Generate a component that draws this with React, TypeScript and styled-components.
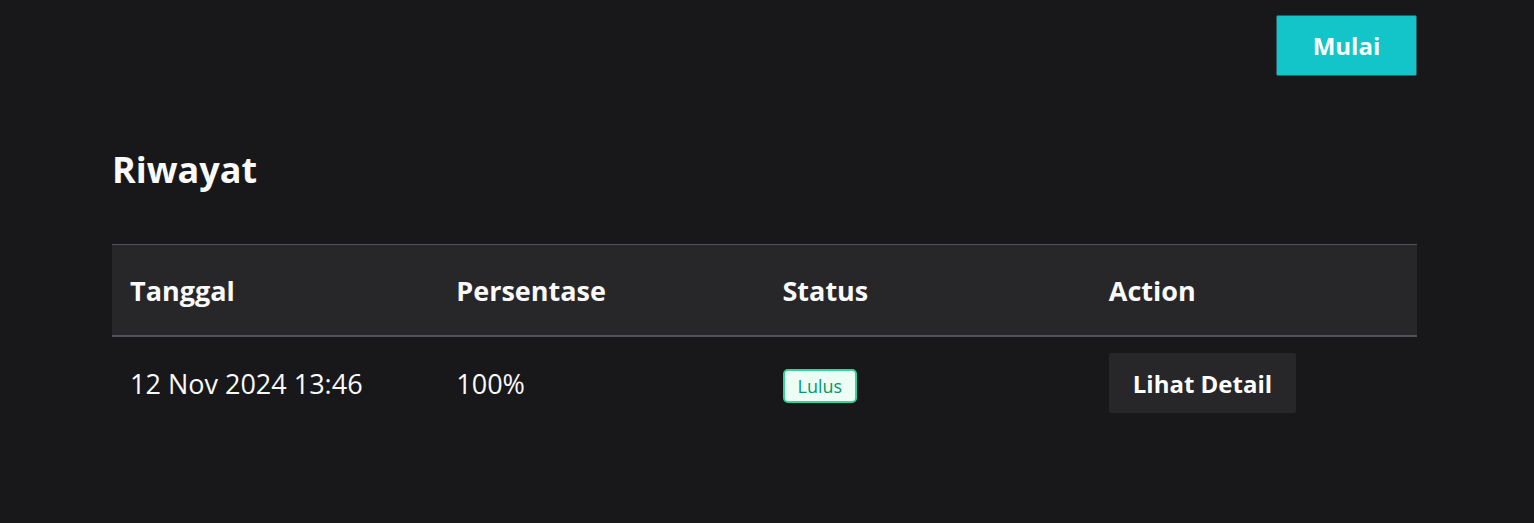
import React from "react";
import styled, { createGlobalStyle } from "styled-components";

const GlobalStyle = createGlobalStyle`
  html, body {
    margin: 0;
    padding: 0;
    background: #18181b;
    color: #fafafa;
    font-family: "Open Sans", "Noto Sans", sans-serif;
  }
`;

const Page = styled.div`
  min-height: 523px;
  padding: 15px 117px 0 112px;
  box-sizing: border-box;
`;

const TopBar = styled.div`
  display: flex;
  justify-content: flex-end;
`;

const StartButton = styled.button`
  width: 141px;
  height: 61px;
  border: 1px solid #2f5f66;
  border-radius: 2px;
  background: #13c5c8;
  color: #ffffff;
  font-family: inherit;
  font-weight: 700;
  font-size: 24px;
  cursor: pointer;
`;

const Title = styled.h2`
  margin: 70px 0 0;
  font-size: 36px;
  line-height: 48px;
  font-weight: 700;
`;

const Table = styled.table`
  width: 100%;
  margin-top: 50px;
  border-collapse: collapse;
  table-layout: fixed;
`;

const HeadRow = styled.tr`
  background: #27272a;
  border-top: 1px solid #52525b;
  border-bottom: 2px solid #52525b;
`;

const HeadCell = styled.th`
  height: 90px;
  padding: 0 18px;
  text-align: left;
  font-size: 27px;
  font-weight: 700;
`;

const Cell = styled.td`
  height: 92px;
  padding: 0 18px;
  font-size: 27px;
  font-weight: 400;
  vertical-align: middle;
`;

const Badge = styled.span<{ $tone: "pass" | "fail" }>`
  display: inline-block;
  padding: 3px 13px;
  border: 2px solid ${(p) => (p.$tone === "pass" ? "#34d399" : "#f87171")};
  border-radius: 5px;
  background: ${(p) => (p.$tone === "pass" ? "#ecfdf5" : "#fef2f2")};
  color: ${(p) => (p.$tone === "pass" ? "#059669" : "#dc2626")};
  font-size: 18px;
  line-height: 24px;
`;

const DetailButton = styled.button`
  height: 60px;
  padding: 0 24px;
  border: none;
  border-radius: 2px;
  background: #27272a;
  color: #ffffff;
  font-family: inherit;
  font-size: 24px;
  font-weight: 700;
  cursor: pointer;
`;

const history = [
  { date: "12 Nov 2024 13:46", percent: "100%", passed: true },
];

const App: React.FC = () => (
  <>
    <GlobalStyle />
    <Page>
      <TopBar>
        <StartButton>Mulai</StartButton>
      </TopBar>
      <Title>Riwayat</Title>
      <Table>
        <thead>
          <HeadRow>
            <HeadCell>Tanggal</HeadCell>
            <HeadCell>Persentase</HeadCell>
            <HeadCell>Status</HeadCell>
            <HeadCell>Action</HeadCell>
          </HeadRow>
        </thead>
        <tbody>
          {history.map((h) => (
            <tr key={h.date}>
              <Cell>{h.date}</Cell>
              <Cell>{h.percent}</Cell>
              <Cell>
                <Badge $tone={h.passed ? "pass" : "fail"}>
                  {h.passed ? "Lulus" : "Gagal"}
                </Badge>
              </Cell>
              <Cell>
                <DetailButton>Lihat Detail</DetailButton>
              </Cell>
            </tr>
          ))}
        </tbody>
      </Table>
    </Page>
  </>
);

export default App;
